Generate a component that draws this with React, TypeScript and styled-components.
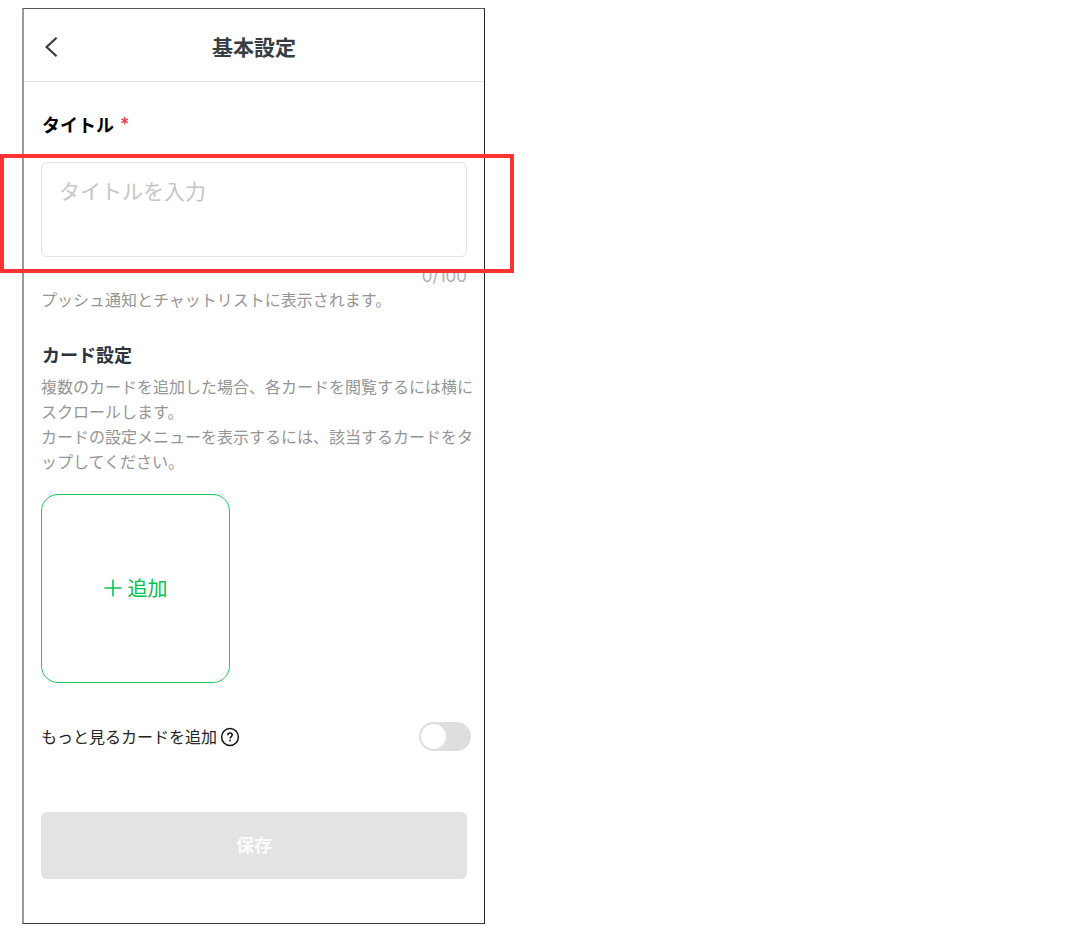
import React, { useState } from "react";
import styled, { createGlobalStyle } from "styled-components";

const GlobalStyle = createGlobalStyle`
  * { box-sizing: border-box; }
  body {
    margin: 0;
    background: #fff;
    color: #000;
    font-family: "Noto Sans CJK JP", "Noto Sans", sans-serif;
    font-size: 16px;
    line-height: 25px;
  }
  button, input, textarea { font: inherit; }
`;

const Page = styled.div`
  padding: 8px 22px 15px;
  overflow-x: hidden;
`;

const Screen = styled.main`
  width: 100%;
  max-width: 463px;
  border-style: solid;
  border-width: 1px 1px 1px 2px;
  border-color: #555 #222 #3a3a3a #999;
`;

const Header = styled.header`
  display: grid;
  grid-template-columns: 54px 1fr 54px;
  align-items: center;
  padding: 19px 0 16px;
  border-bottom: 1px solid #dfe1e4;
`;

const BackButton = styled.button`
  display: flex;
  align-items: center;
  justify-content: center;
  height: 37px;
  padding: 0;
  border: 0;
  background: none;
  color: #383d45;
  cursor: pointer;
`;

const Title = styled.h1`
  margin: 0;
  color: #383d45;
  font-size: 21px;
  line-height: 37px;
  text-align: center;
`;

const Form = styled.form`
  display: flex;
  flex-direction: column;
  padding: 30px 17px 44px;
`;

const FieldLabel = styled.label`
  display: flex;
  gap: 6px;
  margin-bottom: 25px;
  padding-left: 1px;
  font-size: 18px;
  font-weight: 700;
`;

const Required = styled.span`
  color: #ff334b;
  font-family: Inter, sans-serif;
  font-weight: 500;
`;

const Field = styled.div`
  position: relative;
  display: flex;
`;

const TitleInput = styled.textarea`
  flex: 1;
  min-width: 0;
  height: 95px;
  padding: 12px 17px;
  border: 1px solid #e2e2e2;
  border-radius: 6px;
  background: #fff;
  font-size: 21px;
  line-height: 30px;
  resize: none;
  outline: none;
  &::placeholder {
    color: #c6c6c6;
    opacity: 1;
  }
`;

const Highlight = styled.div`
  position: absolute;
  inset: -8px -47px -16px -41px;
  border: 4px solid #ff3333;
  pointer-events: none;
  z-index: 1;
`;

const Counter = styled.output`
  margin-top: 9px;
  color: #b0b0b0;
  font-family: Inter, sans-serif;
  font-size: 17px;
  line-height: 20px;
  text-align: right;
`;

const Hint = styled.p`
  margin: 1px -8px 0 0;
  color: #959595;
`;

const SectionTitle = styled.h2`
  margin: 30px 0 6px;
  padding-left: 1px;
  color: #2c333b;
  font-size: 18px;
  line-height: 25px;
`;

const AddCard = styled.button`
  display: flex;
  align-items: center;
  justify-content: center;
  gap: 6px;
  width: 189px;
  height: 189px;
  margin-top: 20px;
  padding: 0 0 2px;
  border: 1px solid #1ec95f;
  border-radius: 17px;
  background: #fff;
  color: #06c04c;
  font-size: 20px;
  cursor: pointer;
`;

const OptionRow = styled.div`
  display: flex;
  align-items: center;
  margin: 39px -4px 61px 0;
`;

const OptionLabel = styled.label`
  color: #222;
`;

const HelpButton = styled.button`
  display: flex;
  margin-left: 3px;
  padding: 0;
  border: 0;
  background: none;
  color: #111;
  cursor: pointer;
`;

const Switch = styled.input`
  appearance: none;
  display: flex;
  width: 52px;
  height: 29px;
  margin: 0 0 0 auto;
  padding: 2px;
  border-radius: 15px;
  background: #dedede;
  cursor: pointer;
  &::before {
    content: "";
    width: 25px;
    height: 25px;
    border-radius: 50%;
    background: #fff;
  }
  &:checked {
    justify-content: flex-end;
    background: #06c755;
  }
`;

const SaveButton = styled.button`
  height: 67px;
  padding: 0 0 2px;
  border: 0;
  border-radius: 6px;
  background: #e3e3e3;
  color: #fafafa;
  font-size: 18px;
  font-weight: 700;
`;

export default function App() {
  const [title, setTitle] = useState("");
  const [more, setMore] = useState(false);

  return (
    <Page>
      <GlobalStyle />
      <Screen>
        <Header>
          <BackButton type="button" aria-label="戻る">
            <svg width="14" height="22" viewBox="0 0 14 22" fill="none" stroke="currentColor" strokeWidth="2.2">
              <path d="M12.6 1.7 2.6 11l10 9.3" />
            </svg>
          </BackButton>
          <Title>基本設定</Title>
        </Header>
        <Form onSubmit={(e) => e.preventDefault()}>
          <FieldLabel htmlFor="title">
            タイトル<Required>*</Required>
          </FieldLabel>
          <Field>
            <TitleInput
              id="title"
              placeholder="タイトルを入力"
              maxLength={100}
              value={title}
              onChange={(e) => setTitle(e.target.value)}
            />
            <Highlight />
          </Field>
          <Counter htmlFor="title">{`${title.length}/100`}</Counter>
          <Hint>プッシュ通知とチャットリストに表示されます。</Hint>

          <SectionTitle>カード設定</SectionTitle>
          <Hint as="div">
            複数のカードを追加した場合、各カードを閲覧するには横にスクロールします。
            <br />
            カードの設定メニューを表示するには、該当するカードをタップしてください。
          </Hint>
          <AddCard type="button">
            <svg width="18" height="18" viewBox="0 0 18 18" fill="none" stroke="currentColor" strokeWidth="1.5">
              <path d="M9 .5v17M.5 9h17" />
            </svg>
            追加
          </AddCard>

          <OptionRow>
            <OptionLabel htmlFor="more">もっと見るカードを追加</OptionLabel>
            <HelpButton type="button" aria-label="ヘルプ">
              <svg width="20" height="20" viewBox="0 0 20 20" fill="none" stroke="currentColor" strokeWidth="1.5">
                <circle cx="10" cy="10" r="8.4" />
                <path d="M7.8 8.2c0-1.3 1-2.1 2.2-2.1s2.2.8 2.2 2c0 1.5-2.1 1.6-2.1 3.4" />
                <circle cx="10.1" cy="13.5" r=".9" fill="currentColor" stroke="none" />
              </svg>
            </HelpButton>
            <Switch
              id="more"
              type="checkbox"
              role="switch"
              checked={more}
              onChange={(e) => setMore(e.target.checked)}
            />
          </OptionRow>

          <SaveButton type="submit" disabled>
            保存
          </SaveButton>
        </Form>
      </Screen>
    </Page>
  );
}
